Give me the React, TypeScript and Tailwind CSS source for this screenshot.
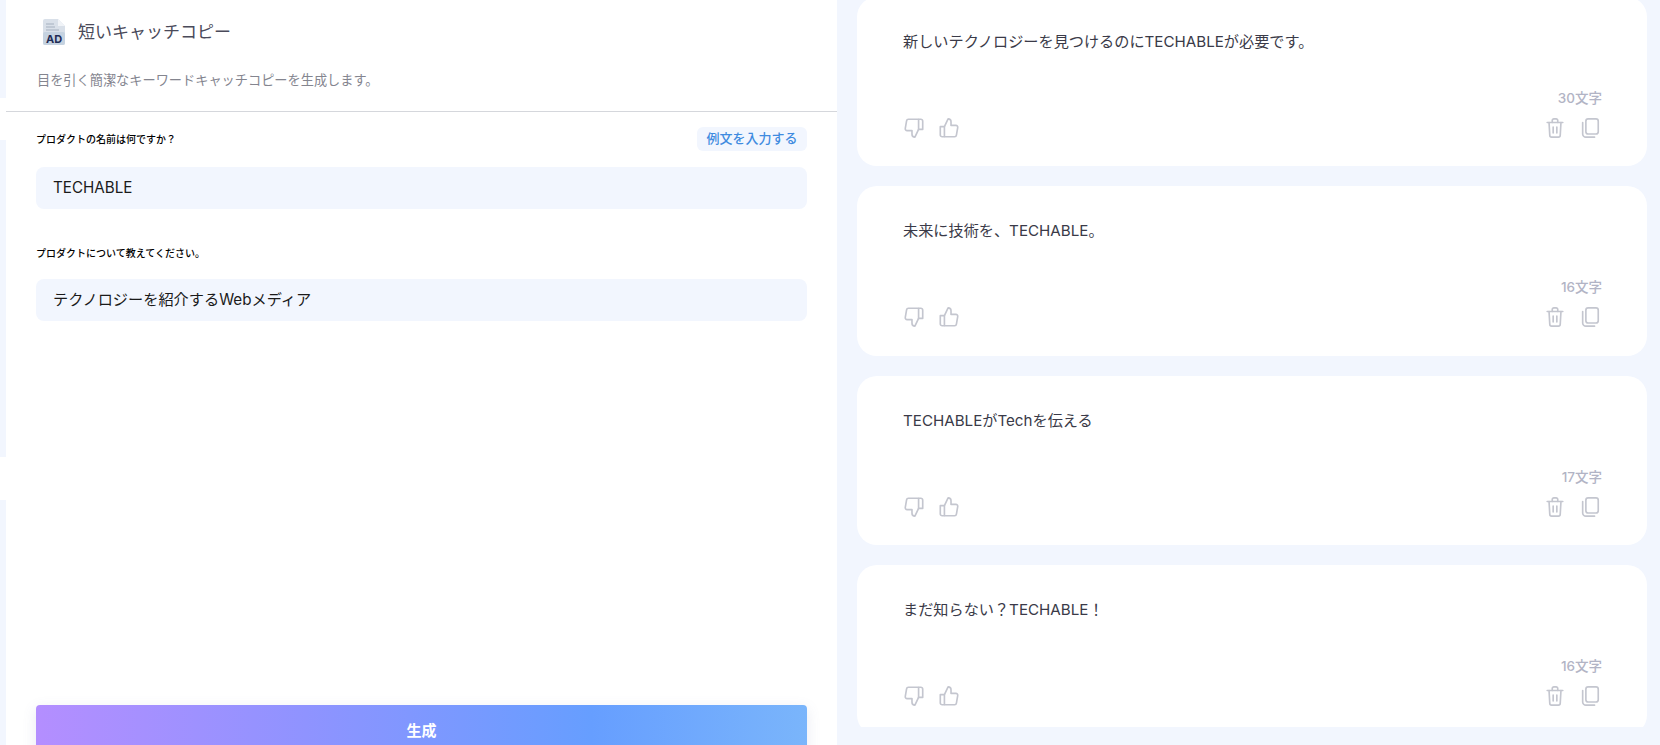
const results = [
  { text: "新しいテクノロジーを見つけるのにTECHABLEが必要です。", count: 30 },
  { text: "未来に技術を、TECHABLE。", count: 16 },
  { text: "TECHABLEがTechを伝える", count: 17 },
  { text: "まだ知らない？TECHABLE！", count: 16 },
];

function AdFileIcon() {
  return (
    <svg width="26" height="26" viewBox="0 0 26 26" className="shrink-0">
      <path d="M2 2a2 2 0 0 1 2-2h13l7 7v17a2 2 0 0 1-2 2H4a2 2 0 0 1-2-2z" fill="#d9e0e9" />
      <path d="M17 0l7 7h-7z" fill="#f0f3f7" />
      <path d="M5 5h8M5 8h9M5 11h13" stroke="#a5b0bf" strokeWidth="1" />
      <rect x="2" y="13" width="22" height="13" rx="2" fill="#c5d2e0" />
      <text x="13" y="24" textAnchor="middle" fontSize="11" fontWeight="700" fill="#1f2c55" fontFamily="Inter, sans-serif">
        AD
      </text>
    </svg>
  );
}

function ThumbIcon({ down }: { down?: boolean }) {
  return (
    <svg
      width="22"
      height="22"
      viewBox="0 0 24 24"
      fill="none"
      stroke="currentColor"
      strokeWidth="1.8"
      strokeLinejoin="round"
      className={down ? "rotate-180" : ""}
    >
      <path d="M2.5 10.5h4.5v11H4.5a2 2 0 0 1-2-2z" />
      <path d="M7 10.5l4-8.5c1.9 0 3.2 1.4 3.2 3.2v4h5.3a2 2 0 0 1 2 2.4l-1.4 8.2a2 2 0 0 1-2 1.7H7" />
    </svg>
  );
}

function TrashIcon() {
  return (
    <svg width="22" height="22" viewBox="0 0 24 24" fill="none" stroke="currentColor" strokeWidth="1.8" strokeLinecap="round" strokeLinejoin="round">
      <path d="M3.5 6h17" />
      <path d="M9 6V3.8A1.8 1.8 0 0 1 10.8 2h2.4A1.8 1.8 0 0 1 15 3.8V6" />
      <path d="M5.5 6l.8 14a2 2 0 0 0 2 2h7.4a2 2 0 0 0 2-2l.8-14" />
      <path d="M10 11v6.5M14 11v6.5" />
    </svg>
  );
}

function CopyIcon() {
  return (
    <svg width="22" height="22" viewBox="0 0 24 24" fill="none" stroke="currentColor" strokeWidth="1.8" strokeLinecap="round" strokeLinejoin="round">
      <rect x="7.5" y="2" width="13.5" height="16.5" rx="2.5" />
      <path d="M4 6v12.5A3.5 3.5 0 0 0 7.500 22H17" />
    </svg>
  );
}

function ResultCard({ text, count }: { text: string; count: number }) {
  return (
    <article className="flex h-[169.5px] shrink-0 flex-col rounded-[20px] bg-white pl-[46px] pr-[45px]">
      <p className="mt-[33.4px] text-[15.17px] leading-[24px] text-[#3a3a48]">{text}</p>
      <span className="mt-auto text-right text-[13.5px] font-medium leading-[18px] text-[#b2b4c5]">{count}文字</span>
      <div className="mb-[27.3px] mr-[1px] mt-[10px] flex items-center justify-between text-[#c4c6cf]">
        <div className="flex items-center gap-[13px]">
          <ThumbIcon down />
          <ThumbIcon />
        </div>
        <div className="flex items-center gap-[13px]">
          <TrashIcon />
          <CopyIcon />
        </div>
      </div>
    </article>
  );
}

export default function App() {
  return (
    <div
      className="flex h-[745px] w-full overflow-hidden bg-[#f2f6fe] text-[#3f3f4e]"
      style={{ fontFamily: '"Inter", "Noto Sans CJK JP", sans-serif' }}
    >
      <div className="flex w-[6px] shrink-0 flex-col bg-white">
        <div className="h-[98px] bg-[#f2f6fe]" />
        <div className="mt-[42px] h-[317px] bg-[#f2f6fe]" />
        <div className="mt-[43px] flex-1 bg-[#f2f6fe]" />
      </div>

      <main className="flex w-[831px] shrink-0 flex-col bg-white">
        <header className="h-[112px] border-b border-[#d5d7dc] pl-[30px]">
          <div className="ml-[5px] mt-[16px] flex h-[32px] items-center gap-[11px]">
            <AdFileIcon />
            <h1 className="text-[17px] font-normal leading-[26px] text-[#4a4a5a]">短いキャッチコピー</h1>
          </div>
          <p className="ml-[1px] mt-[22px] text-[13.2px] leading-[20px] text-[#84858f]">目を引く簡潔なキーワードキャッチコピーを生成します。</p>
        </header>

        <form className="flex flex-1 flex-col pl-[30px] pr-[30px]">
          <div className="mt-[15px] flex h-[24px] items-center justify-between">
            <label className="pt-[1px] text-[10px] font-medium text-black">プロダクトの名前は何ですか？</label>
            <button type="button" className="h-[24px] w-[110px] rounded-[6px] bg-[#f2f6fe] text-[13px] font-medium text-[#3f8be0]">
              例文を入力する
            </button>
          </div>
          <div className="mt-[16px] flex h-[42px] items-center rounded-[8px] bg-[#f2f6fe] px-[17px] pt-[1px] text-[15.2px] text-[#1a1a1a]">TECHABLE</div>

          <label className="mt-[36px] text-[10px] font-medium leading-[16px] text-black">プロダクトについて教えてください。</label>
          <div className="mt-[18px] flex h-[42px] items-center rounded-[8px] bg-[#f2f6fe] px-[17px] text-[15.2px] text-[#1a1a1a]">テクノロジーを紹介するWebメディア</div>

          <button
            type="button"
            className="-mb-[12px] mt-auto h-[52px] shrink-0 rounded-[4px] bg-[linear-gradient(90deg,#b48eff_0%,#8f93ff_35%,#669eff_72%,#7ab5fb_100%)] text-[15px] font-bold text-white shadow-[0_4px_14px_rgba(100,110,160,0.15)]"
          >
            生成
          </button>
        </form>
      </main>

      <section className="ml-[20px] h-[727px] w-[790px] shrink-0 overflow-hidden">
        <div className="-mt-[3.5px] flex flex-col gap-[20px]">
          {results.map((r) => (
            <ResultCard key={r.text} text={r.text} count={r.count} />
          ))}
        </div>
      </section>
    </div>
  );
}
